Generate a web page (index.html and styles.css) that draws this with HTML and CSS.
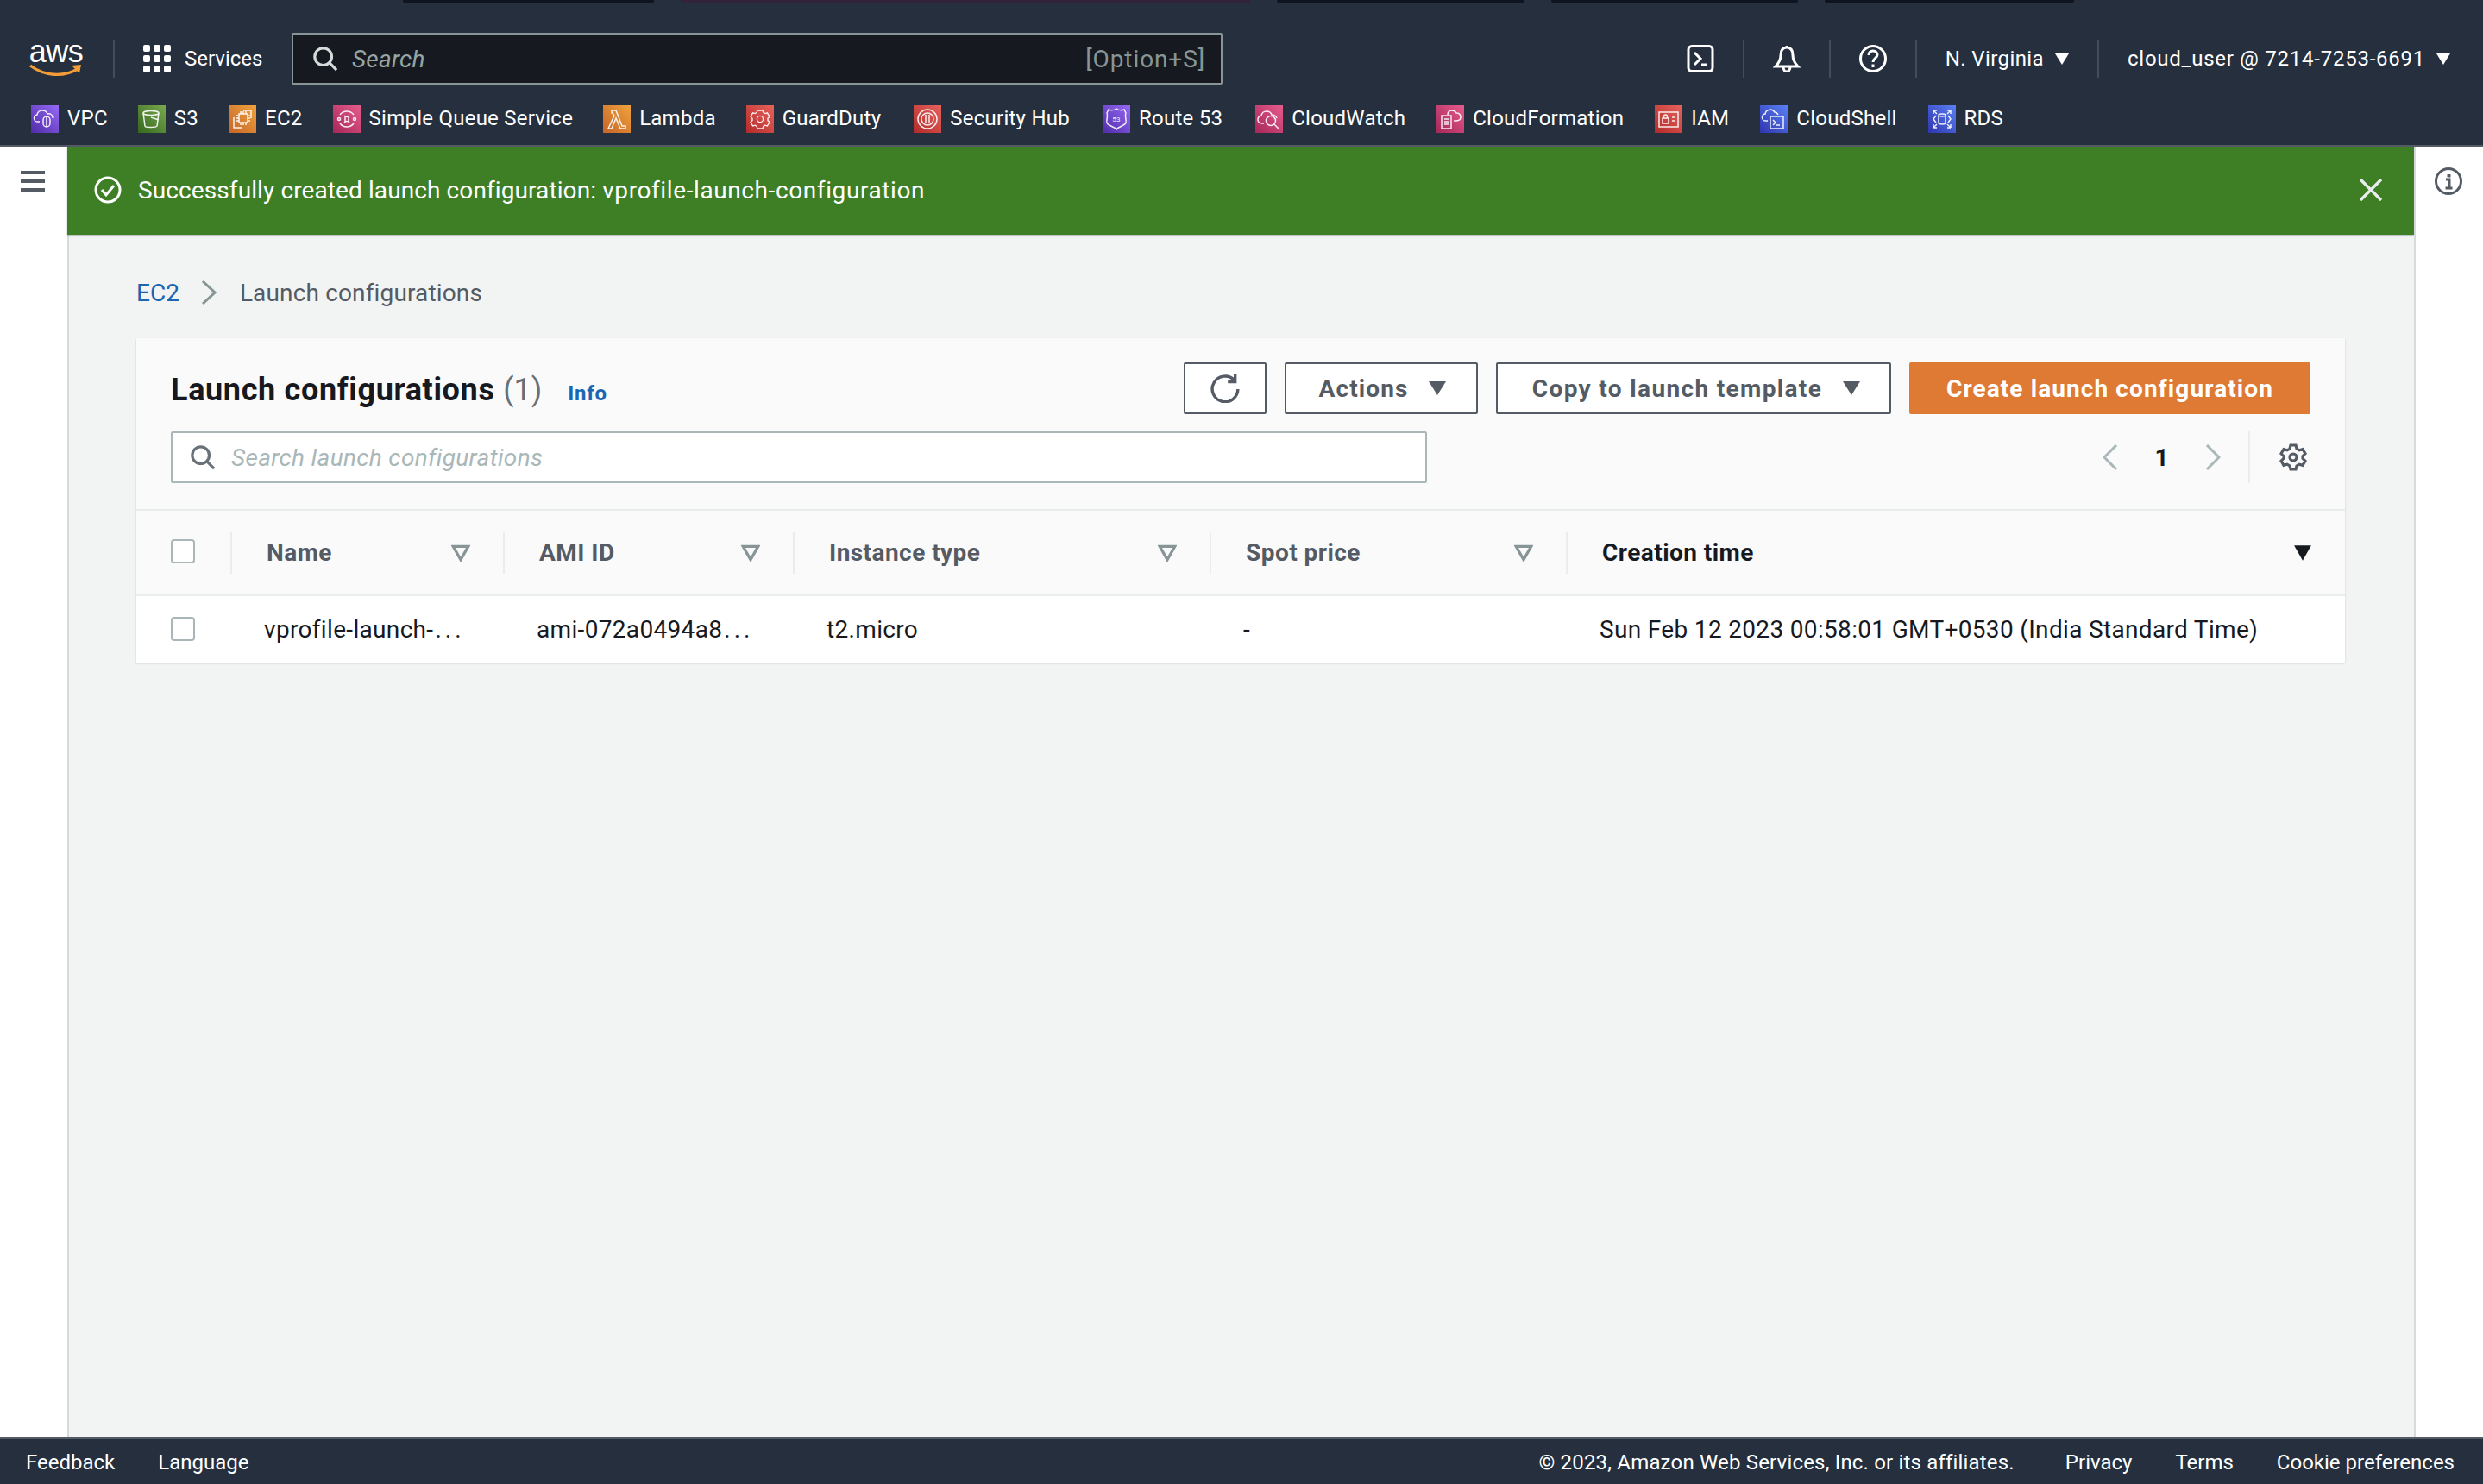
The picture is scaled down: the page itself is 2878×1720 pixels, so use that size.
FILE: index.html
```html
<!DOCTYPE html>
<html lang="en">
<head>
	<title>Launch configurations | EC2 Management Console</title>
	<meta charset="UTF-8">
	<link rel="stylesheet" href="styles.css">
</head>
<body>
<div class="page">
	<header class="topbar">
		<div class="tabs">
			<span class="tab t1"></span><span class="tab t2"></span><span class="tab t3"></span><span class="tab t4"></span><span class="tab t5"></span>
		</div>
		<div class="toprow">
			<div class="logo">
				<span class="logo-text">aws</span>
				<svg class="logo-smile" viewBox="0 0 62 16"><path d="M1 2c16 12 38 14 55 4" fill="none" stroke="#f29d38" stroke-width="3.4"/><path d="M49 2l11-1-2 10z" fill="#f29d38"/></svg>
			</div>
			<span class="vsep logo-sep"></span>
			<svg class="grid-ico" viewBox="0 0 32 32" fill="#fff"><rect x="0" y="0" width="8" height="8" rx="2"/><rect x="12" y="0" width="8" height="8" rx="2"/><rect x="24" y="0" width="8" height="8" rx="2"/><rect x="0" y="12" width="8" height="8" rx="2"/><rect x="12" y="12" width="8" height="8" rx="2"/><rect x="24" y="12" width="8" height="8" rx="2"/><rect x="0" y="24" width="8" height="8" rx="2"/><rect x="12" y="24" width="8" height="8" rx="2"/><rect x="24" y="24" width="8" height="8" rx="2"/></svg>
			<span class="services">Services</span>
			<div class="gsearch">
				<svg class="gsearch-ico" viewBox="0 0 32 32" fill="none" stroke="#d5dbdb" stroke-width="3.4"><circle cx="13.500" cy="13.500" r="10.500"/><path d="M21 21l9 9"/></svg>
				<span class="gsearch-text">Search</span>
				<span class="gsearch-key">[Option+S]</span>
			</div>
			<div class="topright">
				<svg class="top-ico" viewBox="0 0 32 32" fill="none" stroke="#fff" stroke-width="3"><rect x="2" y="1.500" width="28" height="29" rx="4"/><path d="M9 9l7 7-7 7M17 23h6"/></svg>
				<span class="vsep"></span>
				<svg class="top-ico" viewBox="0 0 32 32" fill="none" stroke="#fff" stroke-width="3"><path d="M16 3c-5 0-7 4-7 9 0 6-2 9-6 13h26c-4-4-6-7-6-13 0-5-2-9-7-9zM16 1v3M12 25c0 4 2 6 4 6s4-2 4-6"/></svg>
				<span class="vsep"></span>
				<svg class="top-ico" viewBox="0 0 32 32" fill="none" stroke="#fff" stroke-width="3"><circle cx="16" cy="16" r="14.500"/><path d="M11 12c0-3 2-5 5-5s5 2 5 4.500c0 4-5 4-5 8.500"/><path d="M16 22.500v3.500"/></svg>
				<span class="vsep"></span>
				<span class="top-link region">N. Virginia<i class="caret-w"></i></span>
				<span class="vsep"></span>
				<span class="top-link account">cloud_user @ 7214-7253-6691<i class="caret-w"></i></span>
			</div>
		</div>
		<nav class="favs">
			<a class="fav"><span class="fav-ico purple"><svg viewBox="0 0 32 32"><path d="M10 19H8a4 4 0 0 1-1-8 6 6 0 0 1 6-5c3 0 5 1 6 4 3-1 6 1 6 4 2 0 1 0 1 0"/><rect x="14" y="13" width="8" height="12" rx="4"/><path d="M18 13v12"/></svg></span>VPC</a>
			<a class="fav"><span class="fav-ico green"><svg viewBox="0 0 32 32"><ellipse cx="15" cy="9" rx="9" ry="2.500"/><path d="M6 9l2 15c0 2 13 2 14 0l2-15M15 14l9 3"/></svg></span>S3</a>
			<a class="fav"><span class="fav-ico orange"><svg viewBox="0 0 32 32"><rect x="12" y="10" width="10" height="10"/><path d="M14 7v3M17 7v3M20 7v3M14 20v3M17 20v3M20 20v3M9 12h3M9 15h3M9 18h3M22 12h3M22 15h3M22 18h3M17 6h9v9M6 14v12h10"/></svg></span>EC2</a>
			<a class="fav"><span class="fav-ico pink"><svg viewBox="0 0 32 32"><path d="M8 11a10 10 0 0 1 16 0M8 21a10 10 0 0 0 16 0"/><path d="M13 12c2 2 4 2 6 0M13 20c2-2 4-2 6 0M14 13v6M18 13v6"/><circle cx="7" cy="16" r="1.500"/><circle cx="25" cy="16" r="1.500"/></svg></span>Simple Queue Service</a>
			<a class="fav"><span class="fav-ico orange"><svg viewBox="0 0 32 32"><path d="M10 6h5l7 18h4v3h-6L15 15 10 27H6l7-15-2-3h-1z"/></svg></span>Lambda</a>
			<a class="fav"><span class="fav-ico red"><svg viewBox="0 0 16 16"><path class="thin" d="M6.500 3h3l.4 1.200 1 .6 1.300-.4 1.300 2.200-1 1v1.200l1 1-1.300 2.200-1.300-.4-1 .6-.4 1.300h-3l-.4-1.300-1-.6-1.300.4-1.300-2.200 1-1V7.600l-1-1 1.300-2.200 1.300.4 1-.6z"/><circle class="thin" cx="8" cy="8" r="1.800"/></svg></span>GuardDuty</a>
			<a class="fav"><span class="fav-ico red"><svg viewBox="0 0 32 32"><circle cx="16" cy="16" r="11"/><circle cx="16" cy="16" r="7"/><path d="M14 11v10M18 11v10"/></svg></span>Security Hub</a>
			<a class="fav"><span class="fav-ico purple"><svg viewBox="0 0 32 32"><path d="M16 4c3 2 6 2 9 1l2 4c-2 4 1 6 0 11-1 4-8 4-11 8-3-4-10-4-11-8-1-5 2-7 0-11l2-4c3 1 6 1 9-1z"/><text class="ico-num" x="16" y="19">53</text></svg></span>Route 53</a>
			<a class="fav"><span class="fav-ico pink"><svg viewBox="0 0 32 32"><path d="M10 21H8a4.500 4.500 0 0 1-1-9 6 6 0 0 1 6-5c3 0 5 1 6 4 3 0 5 1 6 4"/><circle cx="18" cy="18" r="5.500"/><path d="M22 22l5 5"/></svg></span>CloudWatch</a>
			<a class="fav"><span class="fav-ico pink"><svg viewBox="0 0 32 32"><path d="M6 12h11v15H6zM9 16h5M9 19h5M9 22h5M13 11c0-3 2-5 5-5 2 0 4 1 5 3 3 0 5 2 5 5s-3 4-6 4h-2"/></svg></span>CloudFormation</a>
			<a class="fav"><span class="fav-ico red"><svg viewBox="0 0 32 32"><rect x="5" y="8" width="22" height="17"/><rect x="9" y="15" width="7" height="6"/><path d="M10.500 15v-2a2 2 0 0 1 4 0v2M20 14h4M20 18h3"/></svg></span>IAM</a>
			<a class="fav"><span class="fav-ico blue"><svg viewBox="0 0 32 32"><path d="M9 18H7a4 4 0 0 1-1-8 6 6 0 0 1 11-2c2 0 3 1 4 3"/><rect x="12" y="13" width="15" height="14"/><path d="M15 17l3 3-3 3M19 23h4"/></svg></span>CloudShell</a>
			<a class="fav"><span class="fav-ico blue"><svg viewBox="0 0 32 32"><ellipse cx="16" cy="11.500" rx="4" ry="1.500"/><path d="M12 11.500v9c0 2 8 2 8 0v-9M9 12l-3 4 3 4M23 12l3 4-3 4M6 6h4M6 6v4M6 6l4 4M26 6h-4M26 6v4M26 6l-4 4M6 26h4M6 26v-4M6 26l4-4M26 26h-4M26 26v-4M26 26l-4-4"/></svg></span>RDS</a>
		</nav>
	</header>

	<div class="shell">
		<aside class="side-left">
			<div class="burger"><span></span><span></span><span></span></div>
		</aside>
		<main class="content">
			<div class="flash">
				<svg class="flash-ico" viewBox="0 0 32 32" fill="none" stroke="#fff" stroke-width="3"><circle cx="16" cy="16" r="14"/><path d="M9 16l5 6 9-11"/></svg>
				<span class="flash-text">Successfully created launch configuration: <span class="flash-name">vprofile-launch-configuration</span></span>
				<svg class="flash-close" viewBox="0 0 26 26" fill="none" stroke="#eaeded" stroke-width="3.400"><path d="M1 1l24 24M25 1L1 25"/></svg>
			</div>
			<div class="crumbs">
				<a class="crumb-link">EC2</a>
				<svg class="crumb-sep" viewBox="0 0 18 28" fill="none" stroke="#879596" stroke-width="3"><path d="M2 1l14 13L2 27"/></svg>
				<span class="crumb-here">Launch configurations</span>
			</div>
			<section class="card">
				<div class="card-head">
					<div class="head-row">
						<h1 class="title">Launch configurations <span class="count">(1)</span><a class="info">Info</a></h1>
						<div class="actions">
							<button class="btn btn-refresh"><svg viewBox="0 0 32 32" fill="none" stroke="#545b64" stroke-width="3.200"><path d="M26 7a14 14 0 1 0 4 10"/><path d="M27 1v8h-8"/></svg></button>
							<button class="btn btn-actions">Actions<i class="caret"></i></button>
							<button class="btn btn-copy">Copy to launch template<i class="caret"></i></button>
							<button class="btn btn-primary">Create launch configuration</button>
						</div>
					</div>
					<div class="filter-row">
						<div class="filter">
							<svg class="filter-ico" viewBox="0 0 32 32" fill="none" stroke="#687078" stroke-width="3.400"><circle cx="13.500" cy="13.500" r="10.500"/><path d="M21 21l9 9"/></svg>
							<span class="filter-text">Search launch configurations</span>
						</div>
						<div class="pager">
							<svg class="pager-arrow" viewBox="0 0 18 30" fill="none" stroke="#aab7b8" stroke-width="3"><path d="M16 1L2 15l14 14"/></svg>
							<span class="pager-num">1</span>
							<svg class="pager-arrow" viewBox="0 0 18 30" fill="none" stroke="#aab7b8" stroke-width="3"><path d="M2 1l14 14L2 29"/></svg>
							<span class="pager-sep"></span>
							<svg class="gear" viewBox="0 0 16 16" fill="none" stroke="#545b64" stroke-width="1.600"><path d="M6.500 1h3l.5 2 1.500.9 2-.6 1.500 2.600-1.500 1.400v1.400l1.500 1.400-1.500 2.600-2-.6-1.500.9-.5 2h-3l-.5-2-1.500-.9-2 .6-1.500-2.600 1.500-1.400V7.300L1 5.900l1.500-2.600 2 .6L6 3z"/><circle cx="8" cy="8" r="2"/></svg>
						</div>
					</div>
				</div>
				<table class="tbl">
					<colgroup><col class="c0"><col class="c1"><col class="c2"><col class="c3"><col class="c4"><col></colgroup>
					<thead>
						<tr>
							<th class="check-cell"><span class="check"></span></th>
							<th><div class="th-in">Name<svg class="sort" viewBox="0 0 20 18"><path d="M2 2h16l-8 14z"/></svg></div></th>
							<th><div class="th-in">AMI ID<svg class="sort" viewBox="0 0 20 18"><path d="M2 2h16l-8 14z"/></svg></div></th>
							<th><div class="th-in">Instance type<svg class="sort" viewBox="0 0 20 18"><path d="M2 2h16l-8 14z"/></svg></div></th>
							<th><div class="th-in">Spot price<svg class="sort" viewBox="0 0 20 18"><path d="M2 2h16l-8 14z"/></svg></div></th>
							<th><div class="th-in th-active">Creation time<svg class="sort sort-on" viewBox="0 0 20 18"><path d="M1 1h18l-9 16z"/></svg></div></th>
						</tr>
					</thead>
					<tbody>
						<tr>
							<td class="check-cell"><span class="check"></span></td>
							<td>vprofile-launch-<span class="dots">...</span></td>
							<td>ami-072a0494a8<span class="dots">...</span></td>
							<td>t2.micro</td>
							<td>-</td>
							<td>Sun Feb 12 2023 00:58:01 GMT+0530 (India Standard Time)</td>
						</tr>
					</tbody>
				</table>
			</section>
		</main>
		<aside class="side-right">
			<svg class="info-ico" viewBox="0 0 32 32" fill="none" stroke="#545b64" stroke-width="3"><circle cx="16" cy="16" r="14.500"/><path d="M13 14h4v10M12.500 24h8" stroke-width="3"/><path d="M16.500 8v3.500" stroke-width="4"/></svg>
		</aside>
	</div>

	<footer class="footer">
		<div class="foot-left"><a>Feedback</a><a>Language</a></div>
		<div class="foot-right"><span class="copyright">© 2023, Amazon Web Services, Inc. or its affiliates.</span><a>Privacy</a><a>Terms</a><a>Cookie preferences</a></div>
	</footer>
</div>
</body>
</html>
```
FILE: styles.css
```css
* {box-sizing: border-box;}
html, body {height: 100%;}
body {
	margin: 0;
	background: #f2f3f3;
	color: #16191f;
	font-family: Roboto, "Noto Sans", sans-serif;
	font-size: 28px;
}
.page {
	display: flex;
	flex-direction: column;
	height: 1720px;
}

/* top bar */
.topbar {
	height: 170px;
	background: #252f3e;
	border-bottom: 2px solid #545b64;
	color: #fff;
}
.tabs {
	display: flex;
	gap: 31px;
	height: 4px;
	padding-left: 467px;
}
.tab {
	height: 4px;
	background: #0f151e;
	border-radius: 0 0 8px 8px;
}
.t1 {width: 291px;}
.t2 {width: 660px; background: #33233a;}
.t3 {width: 287px;}
.t4 {width: 286px;}
.t5 {width: 289px;}
.toprow {
	display: flex;
	align-items: center;
	height: 60px;
	margin-top: 34px;
	padding-left: 34px;
}
.logo {
	display: flex;
	flex-direction: column;
	width: 62px;
	height: 44px;
	align-items: center;
}
.logo-text {
	font-family: "Liberation Sans", sans-serif;
	font-size: 36px;
	line-height: 28px;
	letter-spacing: -0.5px;
}
.logo-smile {width: 62px; height: 16px;}
.vsep {
	width: 2px;
	height: 44px;
	background: #414d5c;
}
.logo-sep {margin: 0 33px 0 35px;}
.grid-ico {width: 32px; height: 32px;}
.services {
	margin-left: 16px;
	font-size: 24px;
	width: 124px;
}
.gsearch {
	display: flex;
	align-items: center;
	width: 1079px;
	height: 60px;
	padding: 0 18px 0 22px;
	background: #16191f;
	border: 2px solid #879596;
	border-radius: 2px;
}
.gsearch-ico {width: 30px; height: 30px;}
.gsearch-text {
	margin-left: 16px;
	font-style: italic;
	color: #95a5a6;
	letter-spacing: .2px;
	flex: 1;
}
.gsearch-key {color: #879596; letter-spacing: .9px;}
.topright {
	display: flex;
	align-items: center;
	margin-left: auto;
	padding-right: 38px;
	gap: 33px;
}
.top-ico {width: 32px; height: 32px;}
.top-link {
	display: flex;
	align-items: center;
	gap: 13px;
	font-size: 24px;
}
.region {letter-spacing: .4px;}
.account {letter-spacing: .75px;}
.caret-w {
	width: 0;
	height: 0;
	border-left: 8.5px solid transparent;
	border-right: 8.5px solid transparent;
	border-top: 13px solid #fff;
}
.favs {
	display: flex;
	margin-top: 24px;
	padding-left: 36px;
	gap: 36px;
	height: 32px;
}
.fav {
	display: flex;
	align-items: center;
	gap: 10px;
	height: 32px;
	padding-bottom: 3px;
	font-size: 24px;
	letter-spacing: .25px;
	white-space: nowrap;
}
.fav:nth-child(-n+5) {margin-right: -1px;}
.fav:nth-child(n+6):nth-child(-n+8) {margin-right: 2px;}
.fav-ico {
	display: block;
	width: 32px;
	height: 32px;
	margin-bottom: -3px;
}
.fav-ico svg {
	display: block;
	width: 32px;
	height: 32px;
	fill: none;
	stroke: #fff;
	stroke-width: 1.500;
	opacity: .9;
}
.fav-ico svg .thin {stroke-width: .7;}
.ico-num {
	font-family: Roboto, sans-serif;
	font-size: 8px;
	text-anchor: middle;
	fill: #fff;
	stroke: none;
}
.purple {background: linear-gradient(45deg, #4f2ca8, #9669f5);}
.green {background: linear-gradient(45deg, #35681f, #7aa84f);}
.orange {background: linear-gradient(45deg, #c4652a, #f0a23c);}
.pink {background: linear-gradient(45deg, #a62759, #e65c8c);}
.red {background: linear-gradient(45deg, #b22b2a, #e8625c);}
.blue {background: linear-gradient(45deg, #2f35ad, #5a80f5);}

/* page body */
.shell {
	flex: 1;
	display: flex;
	min-height: 0;
}
.side-left {
	width: 80px;
	background: #fff;
	border-right: 2px solid #d5dbdb;
	padding: 28px 0 0 24px;
}
.burger {
	display: flex;
	flex-direction: column;
	gap: 6px;
	width: 28px;
}
.burger span {
	height: 4px;
	background: #545b64;
}
.side-right {
	width: 80px;
	background: #fff;
	border-left: 2px solid #d5dbdb;
	padding: 24px 0 0 22px;
}
.info-ico {display: block; width: 32px; height: 32px;}
.content {
	flex: 1;
	min-width: 0;
}
.flash {
	display: flex;
	align-items: center;
	height: 102px;
	margin-left: -2px;
	padding: 0 37px 2px 31px;
	background: #3e7e24;
	color: #fff;
	box-shadow: 0 1px 2px rgba(0, 28, 36, .3);
}
.flash-ico {width: 32px; height: 32px;}
.flash-text {margin-left: 19px; flex: 1; letter-spacing: .1px;}
.flash-name {letter-spacing: .6px;}
.flash-close {width: 26px; height: 26px;}
.crumbs {
	display: flex;
	align-items: center;
	height: 120px;
	padding: 14px 0 0 78px;
	color: #545b64;
}
.crumb-link {color: #1b66b3;}
.crumb-sep {
	width: 18px;
	height: 28px;
	margin: 0 27px 0 25px;
}
.crumb-here {letter-spacing: .15px;}
.card {
	margin: 0 80px 0 78px;
	background: #fff;
	box-shadow: 0 1px 2px rgba(0, 28, 36, .18);
}
.card-head {
	height: 200px;
	padding: 28px 40px 0 40px;
	background: #fafafa;
	border-bottom: 2px solid #eaeded;
}
.head-row {
	display: flex;
	align-items: center;
	justify-content: space-between;
	height: 60px;
}
.title {
	margin: 0;
	padding-top: 3px;
	font-size: 36px;
	font-weight: 700;
	letter-spacing: .65px;
	display: flex;
	align-items: baseline;
	white-space: pre;
}
.count {font-weight: 400; color: #687078; letter-spacing: 0;}
.info {
	margin-left: 30px;
	font-size: 24px;
	letter-spacing: .7px;
	color: #1b66b3;
}
.actions {
	display: flex;
	gap: 21px;
}
.btn {
	display: flex;
	align-items: center;
	justify-content: center;
	height: 60px;
	background: #fff;
	border: 2px solid #545b64;
	border-radius: 2px;
	font: 700 28px Roboto, sans-serif;
	letter-spacing: 1.1px;
	color: #545b64;
	white-space: nowrap;
}
.btn-refresh {width: 96px;}
.btn-refresh svg {width: 34px; height: 34px;}
.btn-actions {width: 224px; padding: 0 0 0 3px;}
.btn-copy {width: 458px; padding: 0 0 0 6px; letter-spacing: 1.35px;}
.btn-primary {
	width: 465px;
	background: #df7a34;
	border-color: #df7a34;
	color: #fff;
}
.caret {
	width: 0;
	height: 0;
	margin-left: 24px;
	border-left: 10px solid transparent;
	border-right: 10px solid transparent;
	border-top: 16px solid #545b64;
}
.filter-row {
	display: flex;
	align-items: center;
	justify-content: space-between;
	height: 60px;
	margin-top: 20px;
}
.filter {
	display: flex;
	align-items: center;
	width: 1456px;
	height: 60px;
	padding-left: 20px;
	background: #fff;
	border: 2px solid #aab7b8;
	border-radius: 2px;
}
.filter-ico {width: 30px; height: 30px;}
.filter-text {
	margin-left: 18px;
	font-style: italic;
	letter-spacing: .33px;
	color: #aab7b8;
}
.pager {
	display: flex;
	align-items: center;
	height: 60px;
	padding-right: 4px;
}
.pager-arrow {width: 18px; height: 30px;}
.pager-num {
	width: 101px;
	text-align: center;
	font-weight: 700;
}
.pager-sep {
	width: 2px;
	height: 60px;
	margin: 0 34px 0 32px;
	background: #eaeded;
}
.gear {width: 32px; height: 32px;}
.tbl {
	width: 100%;
	table-layout: fixed;
	border-collapse: collapse;
}
.c0 {width: 109px;}
.c1 {width: 316px;}
.c2 {width: 336px;}
.c3 {width: 483px;}
.c4 {width: 413px;}
.tbl th {
	height: 98px;
	padding: 0;
	background: #fafafa;
	border-bottom: 2px solid #eaeded;
	text-align: left;
	color: #545b64;
	font-weight: 700;
	letter-spacing: .45px;
}
.th-in {
	display: flex;
	align-items: center;
	justify-content: space-between;
	height: 48px;
	padding: 0 38px 0 40px;
	border-left: 2px solid #eaeded;
}
.th-active {color: #16191f;}
.sort {
	width: 22px;
	height: 20px;
	fill: none;
	stroke: #879596;
	stroke-width: 3;
}
.sort-on {fill: #16191f; stroke: none;}
.tbl td {
	height: 78px;
	padding: 0 0 0 39px;
	letter-spacing: .33px;
	white-space: nowrap;
}
.tbl th.check-cell {padding: 0 0 4px 40px;}
.tbl td.check-cell {padding: 0 0 2px 40px;}
.dots {margin-left: 2px; letter-spacing: 4px;}
.check {
	display: block;
	width: 28px;
	height: 28px;
	background: #fff;
	border: 2px solid #aab7b8;
	border-radius: 4px;
}

/* footer */
.footer {
	display: flex;
	align-items: center;
	justify-content: space-between;
	height: 54px;
	padding: 2px 33px 0 30px;
	background: #252f3e;
	border-top: 2px solid #545b64;
	color: #fff;
	font-size: 24px;
}
.foot-left, .foot-right {
	display: flex;
	gap: 50px;
}
.copyright {margin-right: 9px; letter-spacing: .18px;}
```
